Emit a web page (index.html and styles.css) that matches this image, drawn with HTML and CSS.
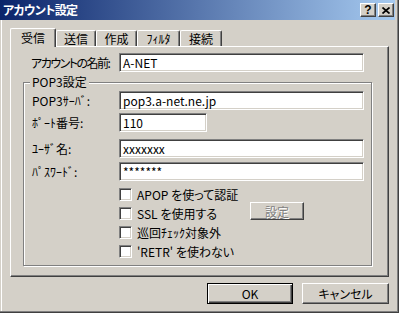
FILE: index.html
```html
<!DOCTYPE html>
<html lang="ja">
<head>
    <meta charset="UTF-8">
    <title>アカウント設定</title>
    <link rel="stylesheet" href="styles.css">
</head>
<body>
    <div class="window">
        <div class="titlebar">
            <span class="title prop">アカウント設定</span>
            <div class="title-buttons">
                <span class="tbtn help">?</span>
                <span class="tbtn">
                    <svg width="8" height="7" viewBox="0 0 8 7"><path d="M0.5 0.5 L7.5 6.5 M7.5 0.5 L0.5 6.5" stroke="#000" stroke-width="1.7" fill="none"/></svg>
                </span>
            </div>
        </div>

        <div class="client">
            <div class="tabs">
                <div class="tab active">受信</div>
                <div class="tab t2">送信</div>
                <div class="tab t3">作成</div>
                <div class="tab t4">ﾌｨﾙﾀ</div>
                <div class="tab t5">接続</div>
            </div>

            <div class="panel">
                <div class="row name-row">
                    <label class="prop">アカウントの名前:</label>
                    <div class="field">A-NET</div>
                </div>

                <fieldset class="group">
                    <legend>POP3設定</legend>
                    <div class="row r-server">
                        <label>POP3ｻｰﾊﾞ:</label>
                        <div class="field">pop3.a-net.ne.jp</div>
                    </div>
                    <div class="row r-port">
                        <label>ﾎﾟｰﾄ番号:</label>
                        <div class="field short">110</div>
                    </div>
                    <div class="row r-user">
                        <label>ﾕｰｻﾞ名:</label>
                        <div class="field">xxxxxxx</div>
                    </div>
                    <div class="row r-pass">
                        <label>ﾊﾟｽﾜｰﾄﾞ:</label>
                        <div class="field">*******</div>
                    </div>

                    <div class="checks">
                        <div class="check"><span class="box"></span><span class="cb-label prop">APOP を使って認証</span></div>
                        <div class="check"><span class="box"></span><span class="cb-label ssl prop">SSL を使用する</span><span class="btn small disabled">設定</span></div>
                        <div class="check"><span class="box"></span><span class="cb-label">巡回ﾁｪｯｸ対象外</span></div>
                        <div class="check"><span class="box"></span><span class="cb-label prop">'RETR' を使わない</span></div>
                    </div>
                </fieldset>
            </div>

            <div class="buttons">
                <span class="btn default ok">OK</span>
                <span class="btn cancel prop">キャンセル</span>
            </div>
        </div>
    </div>
</body>
</html>
```

FILE: styles.css
```css
/* Fenêtre classique */
body {
    margin: 0;
    background: #d4d0c8;
    font-family: "Noto Sans CJK JP", "DejaVu Sans", sans-serif;
    font-size: 12px;
    color: #000;
}

/* kana proportionnels, comme MS UI Gothic */
.prop {
    font-feature-settings: "palt";
}

.window {
    width: 399px;
    height: 313px;
    box-sizing: border-box;
    padding: 0 2px 2px 0;
    background: #d4d0c8;
    box-shadow: inset -1px -1px #404040, inset -2px -2px #808080, inset 1px 0 #d4d0c8, inset 2px 0 #fff;
    display: flex;
    flex-direction: column;
}

.titlebar {
    height: 20px;
    margin-right: 2px;
    padding: 0 1px 0 3px;
    background: linear-gradient(to right, #0a246a, #a6caf0);
    display: flex;
    align-items: center;
    justify-content: space-between;
}

    .titlebar .title {
        color: #fff;
        font-weight: bold;
        line-height: 14px;
        letter-spacing: -0.6px;
    }

.title-buttons {
    display: flex;
    gap: 2px;
}

.tbtn {
    width: 16px;
    height: 14px;
    box-sizing: border-box;
    background: #d4d0c8;
    border: 1px solid;
    border-color: #fff #404040 #404040 #fff;
    box-shadow: inset -1px -1px #808080;
    display: flex;
    align-items: center;
    justify-content: center;
}

    .tbtn.help {
        font-family: "Liberation Sans", sans-serif;
        font-weight: bold;
        font-size: 12px;
        line-height: 12px;
    }

.client {
    flex: 1;
    padding: 8px 8px 0 10px;
    display: flex;
    flex-direction: column;
}

/* Onglets */
.tabs {
    height: 18px;
    display: flex;
    align-items: flex-end;
    position: relative;
    z-index: 1;
}

.tab {
    height: 16px;
    box-sizing: border-box;
    border-top: 1px solid #fff;
    border-left: 1px solid #fff;
    border-right: 1px solid #404040;
    border-radius: 2px 2px 0 0;
    box-shadow: inset -1px 0 #808080;
    text-align: center;
    line-height: 16px;
}

    .tab.active {
        width: 46px;
        height: 19px;
        margin-bottom: -1px;
        background: #d4d0c8;
        line-height: 17px;
    }

    .tab.t2 { width: 40px; }
    .tab.t3 { width: 41px; }
    .tab.t4 { width: 43px; }
    .tab.t5 { width: 42px; }

.panel {
    height: 231px;
    box-sizing: border-box;
    border: 1px solid;
    border-color: #fff #404040 #404040 #fff;
    box-shadow: inset -1px -1px #808080;
    padding: 6px 0 0 12px;
}

/* Champs */
.row {
    display: flex;
    align-items: center;
    height: 19px;
}

    .row label {
        width: 87px;
        line-height: 14px;
        white-space: nowrap;
    }

.name-row {
    padding-left: 8px;
}

    .name-row label {
        width: 88px;
        letter-spacing: -1.5px;
    }

.field {
    width: 245px;
    height: 19px;
    box-sizing: border-box;
    border: 1px solid;
    border-color: #808080 #fff #fff #808080;
    box-shadow: inset 1px 1px #404040, inset -1px -1px #d4d0c8;
    background: #fff;
    padding-left: 3px;
    line-height: 17px;
}

    .field.short {
        width: 88px;
    }

.group {
    width: 349px;
    box-sizing: border-box;
    height: 190px;
    margin: 4px 0 0 0;
    padding: 0 0 0 8px;
    border: 1px solid #808080;
    box-shadow: inset 1px 1px #fff, 1px 1px #fff;
    min-inline-size: 0;
}

    .group legend {
        margin-left: -2px;
        padding: 0 2px;
        line-height: 12px;
        background: #d4d0c8;
    }

.r-server { margin-top: 3px; }
.r-port { margin-top: 3px; }
.r-user { margin-top: 7px; }
.r-pass { margin-top: 4px; }

/* Cases à cocher */
.checks {
    margin-top: 4px;
    padding-left: 87px;
}

.check {
    display: flex;
    align-items: center;
    height: 19px;
}

.box {
    width: 13px;
    height: 13px;
    box-sizing: border-box;
    border: 1px solid;
    border-color: #808080 #fff #fff #808080;
    box-shadow: inset 1px 1px #404040, inset -1px -1px #d4d0c8;
    background: #fff;
}

.cb-label {
    margin-left: 5px;
    line-height: 14px;
    white-space: nowrap;
}

    .cb-label.ssl {
        width: 113px;
    }

/* Boutons */
.btn {
    box-sizing: border-box;
    border: 1px solid;
    border-color: #fff #404040 #404040 #fff;
    box-shadow: inset -1px -1px #808080;
    display: flex;
    align-items: center;
    justify-content: center;
}

    .btn.small {
        width: 54px;
        height: 18px;
        align-self: flex-start;
        margin-top: -2px;
    }

    .btn.disabled {
        color: #808080;
        text-shadow: 1px 1px #fff;
    }

.buttons {
    display: flex;
    justify-content: flex-end;
    gap: 9px;
    margin-top: 6px;
}

    .buttons .btn {
        height: 21px;
    }

.btn.ok {
    width: 86px;
}

.btn.cancel {
    width: 87px;
}

.btn.default {
    border-color: #000;
    box-shadow: inset 1px 1px #fff, inset -1px -1px #404040, inset -2px -2px #808080;
}
```
